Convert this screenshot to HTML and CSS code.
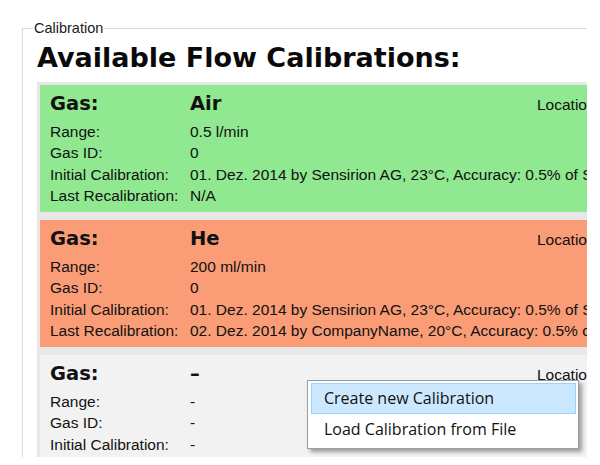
FILE: index.html
```html
<!DOCTYPE html>
<html lang="de">
<head>
<meta charset="utf-8">
<title>Calibration</title>
<link rel="stylesheet" href="styles.css">
</head>
<body>
<div class="clip">
  <fieldset class="groupbox">
    <legend class="gb-legend">Calibration</legend>
    <div class="gb-body">
      <h1 class="title">Available Flow Calibrations:</h1>
      <div class="panel">
        <section class="card card-green">
          <div class="card-head">
            <span class="head-label">Gas:</span>
            <span class="head-value">Air</span>
            <span class="loc">Location: Device</span>
          </div>
          <div class="row"><span class="lbl">Range:</span><span class="val">0.5 l/min</span></div>
          <div class="row"><span class="lbl">Gas ID:</span><span class="val">0</span></div>
          <div class="row"><span class="lbl">Initial Calibration:</span><span class="val">01. Dez. 2014 by Sensirion AG, 23°C, Accuracy: 0.5% of SP</span></div>
          <div class="row"><span class="lbl">Last Recalibration:</span><span class="val">N/A</span></div>
        </section>
        <section class="card card-orange">
          <div class="card-head">
            <span class="head-label">Gas:</span>
            <span class="head-value">He</span>
            <span class="loc">Location: Device</span>
          </div>
          <div class="row"><span class="lbl">Range:</span><span class="val">200 ml/min</span></div>
          <div class="row"><span class="lbl">Gas ID:</span><span class="val">0</span></div>
          <div class="row"><span class="lbl">Initial Calibration:</span><span class="val">01. Dez. 2014 by Sensirion AG, 23°C, Accuracy: 0.5% of SP</span></div>
          <div class="row"><span class="lbl">Last Recalibration:</span><span class="val">02. Dez. 2014 by CompanyName, 20°C, Accuracy: 0.5% of SP</span></div>
        </section>
        <section class="card card-empty">
          <div class="card-head">
            <span class="head-label">Gas:</span>
            <span class="head-value">–</span>
            <span class="loc">Location: -</span>
          </div>
          <div class="row"><span class="lbl">Range:</span><span class="val">-</span></div>
          <div class="row"><span class="lbl">Gas ID:</span><span class="val">-</span></div>
          <div class="row"><span class="lbl">Initial Calibration:</span><span class="val">-</span></div>
          <div class="row"><span class="lbl">Last Recalibration:</span><span class="val">-</span></div>
        </section>
      </div>
    </div>
  </fieldset>

  <ul class="menu">
    <li class="menu-item is-active">Create new Calibration</li>
    <li class="menu-item">Load Calibration from File</li>
  </ul>
</div>
</body>
</html>
```

FILE: styles.css
```css
html, body {
  margin: 0;
  padding: 0;
  background: #ffffff;
}

body {
  font-family: "Liberation Sans", Arial, sans-serif;
  color: #000;
}

.clip {
  position: relative;
  width: 587px;
  height: 457px;
  overflow: hidden;
  background: #ffffff;
}

.groupbox {
  margin: 20px 0 0 22px;
  padding: 0;
  width: 640px;
  min-width: 0;
  border: 1px solid #dcdcdc;
  box-sizing: border-box;
  height: 500px;
}

.gb-legend {
  margin-left: 10px;
  padding: 0 1px;
  font-size: 14.5px;
  line-height: 16px;
  color: #1a1a1a;
}

.gb-body {
  padding: 6px 0 0 14px;
}

.title {
  margin: 0;
  font-family: "DejaVu Sans", Verdana, sans-serif;
  font-weight: bold;
  font-size: 27px;
  line-height: 32px;
  color: #0a0a0a;
  white-space: nowrap;
}

.panel {
  margin-top: 8px;
  background: #e7e7e7;
  padding: 3px 0 0 3px;
  display: flex;
  flex-direction: column;
  gap: 8px;
}

.card {
  height: 127px;
  box-sizing: border-box;
  padding: 3px 0 0 10px;
  overflow: hidden;
  font-size: 15.5px;
  color: #111;
}

.card-green { background: #90e890; }
.card-orange { background: #fa9d77; }
.card-empty { background: #f2f2f2; }

.card-head {
  display: flex;
  align-items: baseline;
  line-height: 31.5px;
  white-space: nowrap;
}

.head-label,
.head-value {
  font-family: "DejaVu Sans", Verdana, sans-serif;
  font-weight: bold;
  font-size: 19.5px;
}

.head-label {
  width: 140px;
  flex: none;
}

.head-value {
  width: 347px;
  flex: none;
}

.loc {
  flex: none;
  font-size: 15.5px;
}

.row {
  display: flex;
  line-height: 21.5px;
  white-space: nowrap;
}

.lbl {
  width: 140px;
  flex: none;
}

.val {
  flex: none;
}

.menu {
  position: absolute;
  left: 307px;
  top: 380px;
  width: 272px;
  box-sizing: border-box;
  margin: 0;
  padding: 2px 2px 3px 3px;
  list-style: none;
  background: #ffffff;
  border: 1px solid #9d9d9d;
  box-shadow: 3px 3px 4px rgba(0, 0, 0, 0.35);
  font-family: "Open Sans", "Noto Sans", sans-serif;
  font-size: 16px;
  color: #111;
}

.menu-item {
  border: 1px solid transparent;
  line-height: 29px;
  padding-left: 12px;
  white-space: nowrap;
}

.menu-item.is-active {
  background: #cce8ff;
  border-color: #99d1ff;
}
```
